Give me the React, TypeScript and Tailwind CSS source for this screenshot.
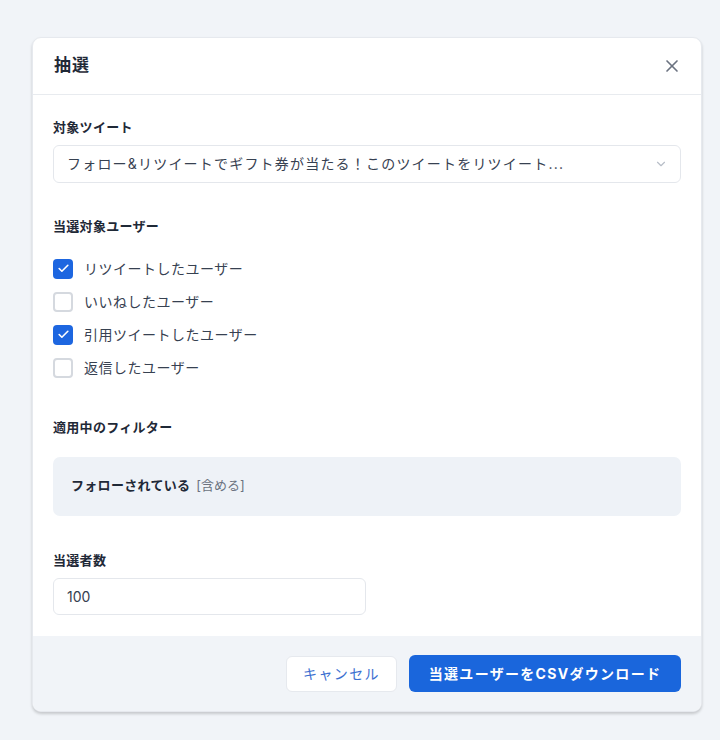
import React from 'react';
import { X, ChevronDown, Check } from 'lucide-react';

const font = { fontFamily: '"Inter", "Noto Sans CJK JP", sans-serif' };

const Box: React.FC<{ checked: boolean; label: string }> = ({ checked, label }) => (
  <label className="flex items-center h-[33px] gap-[11px]">
    {checked ? (
      <span className="w-[20px] h-[20px] rounded-[4px] bg-[#1d66e0] flex items-center justify-center">
        <Check size={13} strokeWidth={3} className="text-white" />
      </span>
    ) : (
      <span className="w-[20px] h-[20px] rounded-[4px] border-2 border-[#d5d9df] bg-white" />
    )}
    <span className="text-[14px] text-[#374151] tracking-[0.5px]">{label}</span>
  </label>
);

const App: React.FC = () => {
  return (
    <div className="w-[720px] h-[740px] bg-[#f1f4f8] pt-[37px] pl-[32px]" style={font}>
      <div className="w-[670px] bg-white rounded-[9px] border border-[#e6e9ee] shadow-[0_2px_3px_rgba(0,0,0,0.18)] overflow-hidden">
        {/* header */}
        <div className="h-[57px] flex items-center justify-between pl-[21px] pr-[19px] border-b border-[#e8ebef]">
          <h2 className="text-[17px] font-bold text-[#1f2937] tracking-[1px]">抽選</h2>
          <X size={20} strokeWidth={2} className="text-[#6b7280]" />
        </div>

        {/* body */}
        <div className="px-[20px] pt-[23px] pb-[21px]">
          <p className="text-[13px] font-bold text-[#1f2937] mb-[7px] tracking-[0.3px]">対象ツイート</p>
          <div className="h-[38px] flex items-center justify-between pl-[13px] pr-[12px] border border-[#e4e7ec] rounded-[6px]">
            <span className="text-[14px] text-[#374151] tracking-[1.2px]">フォロー&リツイートでギフト券が当たる！このツイートをリツイート...</span>
            <ChevronDown size={14} className="text-[#b8bec8]" />
          </div>

          <p className="text-[13px] font-bold text-[#1f2937] mt-[34px] mb-[16px] tracking-[0.3px]">当選対象ユーザー</p>
          <div className="flex flex-col">
            <Box checked label="リツイートしたユーザー" />
            <Box checked={false} label="いいねしたユーザー" />
            <Box checked label="引用ツイートしたユーザー" />
            <Box checked={false} label="返信したユーザー" />
          </div>

          <p className="text-[13px] font-bold text-[#1f2937] mt-[34px] mb-[19px] tracking-[0.3px]">適用中のフィルター</p>
          <div className="h-[59px] bg-[#eef2f7] rounded-[7px] flex items-center pl-[18px] gap-[6px]">
            <span className="text-[13px] font-bold text-[#1f2937] tracking-[0.3px]">フォローされている</span>
            <span className="text-[13px] text-[#6b7280]">[含める]</span>
          </div>

          <p className="text-[13px] font-bold text-[#1f2937] mt-[35px] mb-[8px] tracking-[0.3px]">当選者数</p>
          <div className="w-[313px] h-[37px] flex items-center pl-[13px] border border-[#e4e7ec] rounded-[6px]">
            <span className="text-[14px] text-[#374151]">100</span>
          </div>
        </div>

        {/* footer */}
        <div className="h-[75px] bg-[#f1f4f8] flex items-center justify-end gap-[12px] pr-[20px]">
          <button className="w-[111px] h-[36px] rounded-[6px] bg-white border border-[#e6e9ee] text-[14px] text-[#3b6fd0] tracking-[1.4px]">キャンセル</button>
          <button className="w-[272px] h-[37px] rounded-[6px] bg-[#1a66dc] text-[14px] font-bold text-white tracking-[1.3px]">当選ユーザーをCSVダウンロード</button>
        </div>
      </div>
    </div>
  );
};

export default App;
